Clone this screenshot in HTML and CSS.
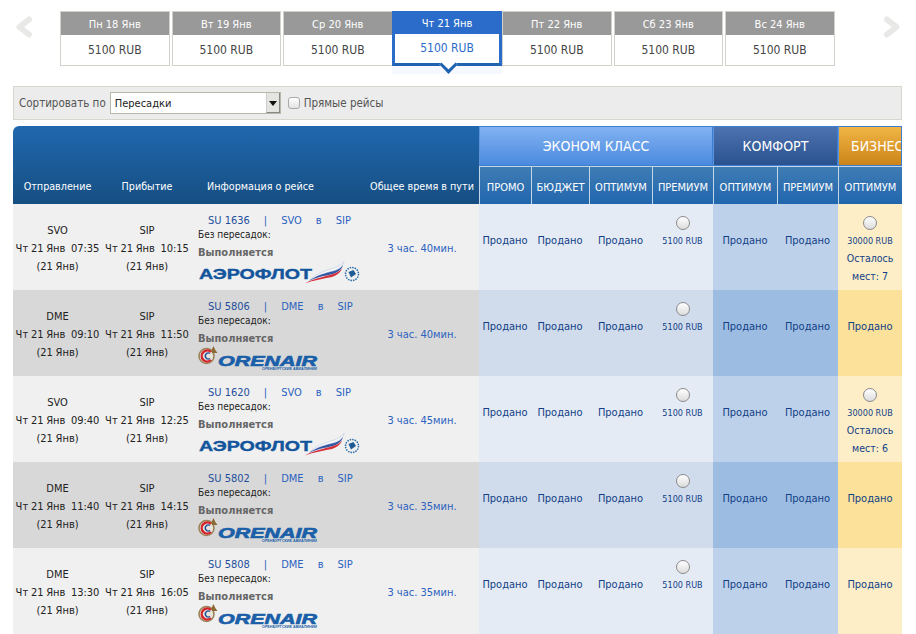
FILE: index.html
```html
<!DOCTYPE html>
<html lang="ru">
<head>
<meta charset="utf-8">
<title>Выбор рейса</title>
<link rel="stylesheet" href="styles.css">
</head>
<body>
<div class="page">
  <div class="dates">
    <svg class="chev" width="18" height="22" viewBox="0 0 18 22"><path d="M14 3.500 4.500 11l9.500 7.500" fill="none" stroke="#e8e8e6" stroke-width="6" stroke-linejoin="round" stroke-linecap="round"/></svg>
    <div class="day"><div class="day-h">Пн 18 Янв</div><div class="day-p">5100 RUB</div></div>
    <div class="day"><div class="day-h">Вт 19 Янв</div><div class="day-p">5100 RUB</div></div>
    <div class="day"><div class="day-h">Ср 20 Янв</div><div class="day-p">5100 RUB</div></div>
    <div class="day on"><div class="day-h">Чт 21 Янв</div><div class="day-p">5100 RUB</div></div>
    <div class="day"><div class="day-h">Пт 22 Янв</div><div class="day-p">5100 RUB</div></div>
    <div class="day"><div class="day-h">Сб 23 Янв</div><div class="day-p">5100 RUB</div></div>
    <div class="day"><div class="day-h">Вс 24 Янв</div><div class="day-p">5100 RUB</div></div>
    <svg class="chev" width="18" height="22" viewBox="0 0 18 22"><path d="M4 3.500 13.500 11 4 18.500" fill="none" stroke="#e8e8e6" stroke-width="6" stroke-linejoin="round" stroke-linecap="round"/></svg>
  </div>
  <div class="sort">
    <span>Сортировать по</span>
    <div class="select"><span class="select-t">Пересадки</span><span class="select-b"></span></div>
    <span class="check"></span>
    <span>Прямые рейсы</span>
  </div>
  <div class="table">
    <div class="head">
      <div class="h-left">
        <span class="hc">Отправление</span><span class="hc">Прибытие</span><span class="hc hc-info">Информация о рейсе</span><span class="hc">Общее время в пути</span>
      </div>
      <div class="h-cls eco">ЭКОНОМ КЛАСС</div>
      <div class="h-cls com">КОМФОРТ</div>
      <div class="h-cls bus">БИЗНЕС</div>
      <div class="h-sub">ПРОМО</div><div class="h-sub">БЮДЖЕТ</div><div class="h-sub">ОПТИМУМ</div><div class="h-sub">ПРЕМИУМ</div><div class="h-sub">ОПТИМУМ</div><div class="h-sub">ПРЕМИУМ</div><div class="h-sub">ОПТИМУМ</div>
    </div>

    <div class="row">
      <div class="c place"><span>SVO</span><span>Чт 21 Янв&nbsp; 07:35</span><span>(21 Янв)</span></div>
      <div class="c place"><span>SIP</span><span>Чт 21 Янв&nbsp; 10:15</span><span>(21 Янв)</span></div>
      <div class="c info">
        <div class="route"><span class="num">SU 1636</span><span>|</span><span>SVO</span><span class="v">в</span><span>SIP</span></div>
        <div class="stops">Без пересадок:</div>
        <div class="oper">Выполняется</div>
        <svg class="logo" width="165" height="30" viewBox="0 0 165 30"><use href="#afl"/></svg>
      </div>
      <div class="c time">3 час. 40мин.</div>
      <div class="c f sold">Продано</div><div class="c f sold">Продано</div><div class="c f sold">Продано</div>
      <div class="c f pick"><span class="radio"></span><span class="price">5100 RUB</span></div>
      <div class="c k sold">Продано</div><div class="c k sold">Продано</div>
      <div class="c b pick"><span class="radio"></span><span class="price">30000 RUB</span><span class="left">Осталось</span><span class="left">мест: 7</span></div>
    </div>

    <div class="row alt">
      <div class="c place"><span>DME</span><span>Чт 21 Янв&nbsp; 09:10</span><span>(21 Янв)</span></div>
      <div class="c place"><span>SIP</span><span>Чт 21 Янв&nbsp; 11:50</span><span>(21 Янв)</span></div>
      <div class="c info">
        <div class="route"><span class="num">SU 5806</span><span>|</span><span>DME</span><span class="v">в</span><span>SIP</span></div>
        <div class="stops">Без пересадок:</div>
        <div class="oper">Выполняется</div>
        <svg class="logo" width="165" height="30" viewBox="0 0 165 30"><use href="#orn"/></svg>
      </div>
      <div class="c time">3 час. 40мин.</div>
      <div class="c f sold">Продано</div><div class="c f sold">Продано</div><div class="c f sold">Продано</div>
      <div class="c f pick"><span class="radio"></span><span class="price">5100 RUB</span></div>
      <div class="c k sold">Продано</div><div class="c k sold">Продано</div>
      <div class="c b sold">Продано</div>
    </div>

    <div class="row">
      <div class="c place"><span>SVO</span><span>Чт 21 Янв&nbsp; 09:40</span><span>(21 Янв)</span></div>
      <div class="c place"><span>SIP</span><span>Чт 21 Янв&nbsp; 12:25</span><span>(21 Янв)</span></div>
      <div class="c info">
        <div class="route"><span class="num">SU 1620</span><span>|</span><span>SVO</span><span class="v">в</span><span>SIP</span></div>
        <div class="stops">Без пересадок:</div>
        <div class="oper">Выполняется</div>
        <svg class="logo" width="165" height="30" viewBox="0 0 165 30"><use href="#afl"/></svg>
      </div>
      <div class="c time">3 час. 45мин.</div>
      <div class="c f sold">Продано</div><div class="c f sold">Продано</div><div class="c f sold">Продано</div>
      <div class="c f pick"><span class="radio"></span><span class="price">5100 RUB</span></div>
      <div class="c k sold">Продано</div><div class="c k sold">Продано</div>
      <div class="c b pick"><span class="radio"></span><span class="price">30000 RUB</span><span class="left">Осталось</span><span class="left">мест: 6</span></div>
    </div>

    <div class="row alt">
      <div class="c place"><span>DME</span><span>Чт 21 Янв&nbsp; 11:40</span><span>(21 Янв)</span></div>
      <div class="c place"><span>SIP</span><span>Чт 21 Янв&nbsp; 14:15</span><span>(21 Янв)</span></div>
      <div class="c info">
        <div class="route"><span class="num">SU 5802</span><span>|</span><span>DME</span><span class="v">в</span><span>SIP</span></div>
        <div class="stops">Без пересадок:</div>
        <div class="oper">Выполняется</div>
        <svg class="logo" width="165" height="30" viewBox="0 0 165 30"><use href="#orn"/></svg>
      </div>
      <div class="c time">3 час. 35мин.</div>
      <div class="c f sold">Продано</div><div class="c f sold">Продано</div><div class="c f sold">Продано</div>
      <div class="c f pick"><span class="radio"></span><span class="price">5100 RUB</span></div>
      <div class="c k sold">Продано</div><div class="c k sold">Продано</div>
      <div class="c b sold">Продано</div>
    </div>

    <div class="row">
      <div class="c place"><span>DME</span><span>Чт 21 Янв&nbsp; 13:30</span><span>(21 Янв)</span></div>
      <div class="c place"><span>SIP</span><span>Чт 21 Янв&nbsp; 16:05</span><span>(21 Янв)</span></div>
      <div class="c info">
        <div class="route"><span class="num">SU 5808</span><span>|</span><span>DME</span><span class="v">в</span><span>SIP</span></div>
        <div class="stops">Без пересадок:</div>
        <div class="oper">Выполняется</div>
        <svg class="logo" width="165" height="30" viewBox="0 0 165 30"><use href="#orn"/></svg>
      </div>
      <div class="c time">3 час. 35мин.</div>
      <div class="c f sold">Продано</div><div class="c f sold">Продано</div><div class="c f sold">Продано</div>
      <div class="c f pick"><span class="radio"></span><span class="price">5100 RUB</span></div>
      <div class="c k sold">Продано</div><div class="c k sold">Продано</div>
      <div class="c b sold">Продано</div>
    </div>
  </div>
</div>

<svg class="defs" width="0" height="0">
  <defs>
    <g id="afl">
      <text x="1" y="21" class="afl-t" textLength="113" lengthAdjust="spacingAndGlyphs">АЭРОФЛОТ</text>
      <path d="M112 22C120 14 130 12 136 10 140 8.500 144 6 146 3.500 145 8 141 11 135 13 127 15 120 17 112 22z" fill="#f7f8fb" stroke="#9fb2d2" stroke-width="0.400"/>
      <path d="M110 23.500C119 17 128 15 136 13 140 12 143 10 145 7 144 11 140 14.500 135 16 127 18 118 19 110 23.500z" fill="#3458a6"/>
      <path d="M107 25.500C117 20 127 18.500 135 16 139 15 142 13 144 10.500 143 14 139 17.500 134 19 125 21 116 22 107 25.500z" fill="#d5303a"/>
      <circle cx="154" cy="16" r="6.500" fill="none" stroke="#2a6ba6" stroke-width="1.500" stroke-dasharray="1.500 1"/>
      <path d="M150.500 14l5-2 2.500 4-5 3.500z" fill="#1e5a94"/>
    </g>
    <g id="orn">
      <circle cx="8.500" cy="12" r="7.500" fill="#e8e4da" stroke="#9a8358" stroke-width="1.600"/>
      <path d="M13 8A5.500 5.500 0 1 0 13 16" fill="none" stroke="#d3232c" stroke-width="2.400"/>
      <path d="M12 9.500a3 3 0 1 0 0 5" fill="none" stroke="#1e4f9c" stroke-width="1.400"/>
      <path d="M15.500 2l1.800 4 2.200 3h-5.500l-.5-3z" fill="#8a6a32"/>
      <text x="20" y="21.500" class="orn-t" textLength="99" lengthAdjust="spacingAndGlyphs">ORENAIR</text>
      <text x="64" y="26" class="orn-s" textLength="55" lengthAdjust="spacingAndGlyphs">ОРЕНБУРГСКИЕ АВИАЛИНИИ</text>
    </g>
  </defs>
</svg>
</body>
</html>
```

FILE: styles.css
```css
* { box-sizing: border-box; }
html, body { margin: 0; padding: 0; background: #fff; }
body { font-family: "DejaVu Sans Condensed", "DejaVu Sans", sans-serif; font-stretch: condensed; font-size: 11px; color: #333; overflow: hidden; height: 634px; }
.page { width: 916px; padding: 11px 14px 0 13px; }
.defs { position: absolute; }

.dates { display: flex; align-items: flex-start; height: 75px; padding-left: 47px; position: relative; }
.chev { position: absolute; top: 5px; left: 2px; }
.chev:last-child { left: auto; right: 1px; }
.day { width: 109.500px; height: 55px; border: 1px solid #d2d2ca; margin-right: 2px; background: #fff; text-align: center; flex: none; }
.day-h { height: 23px; line-height: 25px; background: #999; color: #fff; }
.day-p { line-height: 31px; color: #444; font-size: 12px; }
.day.on { width: 110px; border: 3px solid #2b6ccb; border-top: 0; border-bottom-color: #1f62b0; position: relative; box-shadow: 0 8px 0 #f5f8fe; margin-right: 0; margin-left: -2.500px; }
.day.on .day-h { background: #2b6ccb; margin: 0 -3px; }
.day.on .day-p { color: #2b6ccb; line-height: 28px; }
.day.on::after { content: ""; position: absolute; left: 47px; bottom: -8px; width: 10px; height: 10px; border: solid #1f62b0; border-width: 0 3px 3px 0; background: #fff; transform: rotate(45deg); }

.sort { display: flex; align-items: center; height: 34px; background: #ececec; border: 1px solid #d7d7d0; padding-left: 5px; color: #555; margin-bottom: 6px; font-size: 11.500px; }
.select { width: 171px; height: 22px; margin-left: 4px; background: #fff; border: 1px solid #b8b8a8; display: flex; align-items: center; justify-content: space-between; color: #222; font-size: 11px; }
.select-t { padding-left: 4px; }
.select-b { width: 14px; height: 20px; background: #e4e4e0; border-left: 1px solid #ccc; border-right: 1px solid #888; border-bottom: 1px solid #888; position: relative; }
.select-b::after { content: ""; position: absolute; left: 2px; top: 8px; border: 4px solid transparent; border-top: 5px solid #111; border-bottom: 0; }
.check { width: 12px; height: 12px; margin: 0 4px 0 7px; border: 1px solid #aaa; border-radius: 3px; background: linear-gradient(#fff, #e2e2e2); }

.table { width: 889px; overflow: hidden; border-radius: 6px 0 0 0; }
.head { display: grid; grid-template-columns: 466px 52px 58px 63px 61px 64px 61px 64px; grid-template-rows: 40px 38px; height: 78px; }
.h-left { grid-row: 1 / 3; background: linear-gradient(#2068ae, #164e82); display: grid; grid-template-columns: 89px 90px 173px 114px; align-items: end; color: #fff; }
.hc { text-align: center; line-height: 34px; white-space: nowrap; font-size: 10.700px; }
.hc-info { padding-right: 36px; }
.h-cls { display: flex; align-items: center; justify-content: center; color: #fff; font-size: 14px; border: 1px solid #3d7ed0; border-left-color: #5d93da; white-space: nowrap; overflow: hidden; }
.eco { grid-column: 2 / 6; background: linear-gradient(#82b2f2, #4a8ade); }
.com { grid-column: 6 / 8; background: linear-gradient(#4d73b0, #29528f); }
.bus { grid-column: 8 / 9; background: linear-gradient(#f0b545, #cc8418); justify-content: flex-start; padding-left: 12px; }
.h-sub { display: flex; align-items: center; justify-content: center; padding-top: 3px; background: linear-gradient(#3f7cb4, #2166ad); color: #fff; font-size: 11px; border-left: 1px solid #c2d6ea; border-top: 1px solid #c2d6ea; white-space: nowrap; }

.row { display: grid; grid-template-columns: 89px 90px 173px 114px 52px 58px 63px 61px 64px 61px 64px; height: 86px; background: #f0f0f0; }
.row.alt { background: #d8d8d8; }
.c { display: flex; flex-direction: column; align-items: center; min-width: 0; white-space: nowrap; }
.place { color: #222; line-height: 18px; padding-top: 18px; word-spacing: -0.400px; }
.info { align-items: flex-start; padding: 10px 0 0 6px; }
.route { display: flex; gap: 14px; padding-left: 10px; color: #2b62c0; line-height: 14px; }
.route .num { color: #1e4f9c; }
.stops { color: #222; font-size: 10px; line-height: 14px; }
.oper { color: #666; font-weight: bold; line-height: 12px; margin-top: 5px; }
.logo { display: block; flex: none; margin-top: -1px; }
.afl-t { font: bold 15.500px "Liberation Sans", sans-serif; fill: #12559c; stroke: #12559c; stroke-width: 0.4px; }
.orn-t { font: italic bold 14px "Liberation Sans", sans-serif; fill: #1a5fa8; stroke: #1a5fa8; stroke-width: 0.6px; }
.orn-s { font: bold 3.500px "Liberation Sans", sans-serif; fill: #1a5fa8; }
.time { color: #2b62c0; padding-top: 36px; line-height: 18px; }

.f { background: #e5ebf5; }
.k { background: #bed1ea; }
.b { background: #fdeec8; }
.alt .f { background: #d0dbec; }
.alt .k { background: #9dbce2; }
.alt .b { background: #fbe19a; }
.sold { padding-top: 28px; line-height: 18px; color: #123f86; font-size: 11px; }
.pick { padding-top: 12px; }
.radio { width: 14px; height: 14px; border-radius: 50%; border: 1px solid #8a8a8a; background: linear-gradient(#fff, #dcdcdc); flex: none; }
.price { font-size: 9px; color: #123f86; line-height: 16px; margin-top: 3px; }
.left { color: #123f86; line-height: 18px; font-size: 10.500px; }
```
